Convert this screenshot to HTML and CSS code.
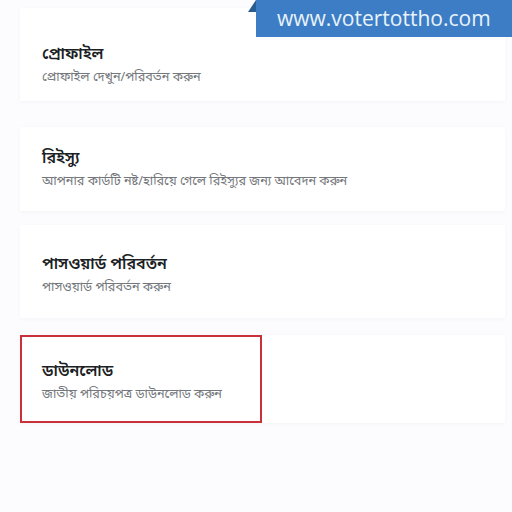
FILE: index.html
```html
<!DOCTYPE html>
<html lang="bn">
<head>
<meta charset="utf-8">
<link rel="stylesheet" href="styles.css">
</head>
<body>
<div class="banner">www.votertottho.com</div>
<div class="list">
  <div class="card c1">
    <div class="title">প্রোফাইল</div>
    <div class="sub">প্রোফাইল দেখুন/পরিবর্তন করুন</div>
  </div>
  <div class="card c2">
    <div class="title">রিইস্যু</div>
    <div class="sub">আপনার কার্ডটি নষ্ট/হারিয়ে গেলে রিইস্যুর জন্য আবেদন করুন</div>
  </div>
  <div class="card c3">
    <div class="title">পাসওয়ার্ড পরিবর্তন</div>
    <div class="sub">পাসওয়ার্ড পরিবর্তন করুন</div>
  </div>
  <div class="card c4">
    <div class="hl">
      <div class="title">ডাউনলোড</div>
      <div class="sub">জাতীয় পরিচয়পত্র ডাউনলোড করুন</div>
    </div>
  </div>
</div>
</body>
</html>
```
FILE: styles.css
```css
html, body { margin: 0; padding: 0; }
body {
  width: 512px; height: 512px; overflow: hidden;
  background: #fcfbfe;
  font-family: "Noto Sans Bengali", "Lohit Bengali", "Noto Sans", sans-serif;
  position: relative;
}
.banner {
  position: absolute; top: 0; left: 256px; width: 256px; height: 37px;
  background: #3d7dc5; color: #e8f3fb;
  font-family: "Open Sans", sans-serif; font-size: 21px;
  line-height: 37px; padding-left: 21px; box-sizing: border-box;
  white-space: nowrap;
}
.banner::before {
  content: ""; position: absolute; left: -8px; top: 0;
  border-right: 8px solid #2a5c94; border-top: 12px solid transparent;
}
.list {
  display: flex; flex-direction: column;
  padding: 8px 7px 0 20px;
}
.card {
  background: #fff;
  box-shadow: 0 1px 4px rgba(0,0,0,0.035);
  padding: 0 22px; box-sizing: border-box;
  display: flex; flex-direction: column;
}
.c1 { height: 93px; padding-top: 35px; }
.c2 { height: 84px; margin-top: 26px; padding-top: 20px; }
.c3 { height: 93px; margin-top: 14px; padding-top: 28px; }
.c4 { height: 88px; margin-top: 17px; padding: 0; }
.hl {
  width: 242px; height: 88px; box-sizing: border-box;
  border: 2px solid #c8313a; padding: 23px 20px 0;
  display: flex; flex-direction: column;
}
.title { font-size: 16px; font-weight: 600; color: #1c1f25; line-height: 24px; }
.sub { font-size: 12.7px; color: #74777c; line-height: 22px; }
```
